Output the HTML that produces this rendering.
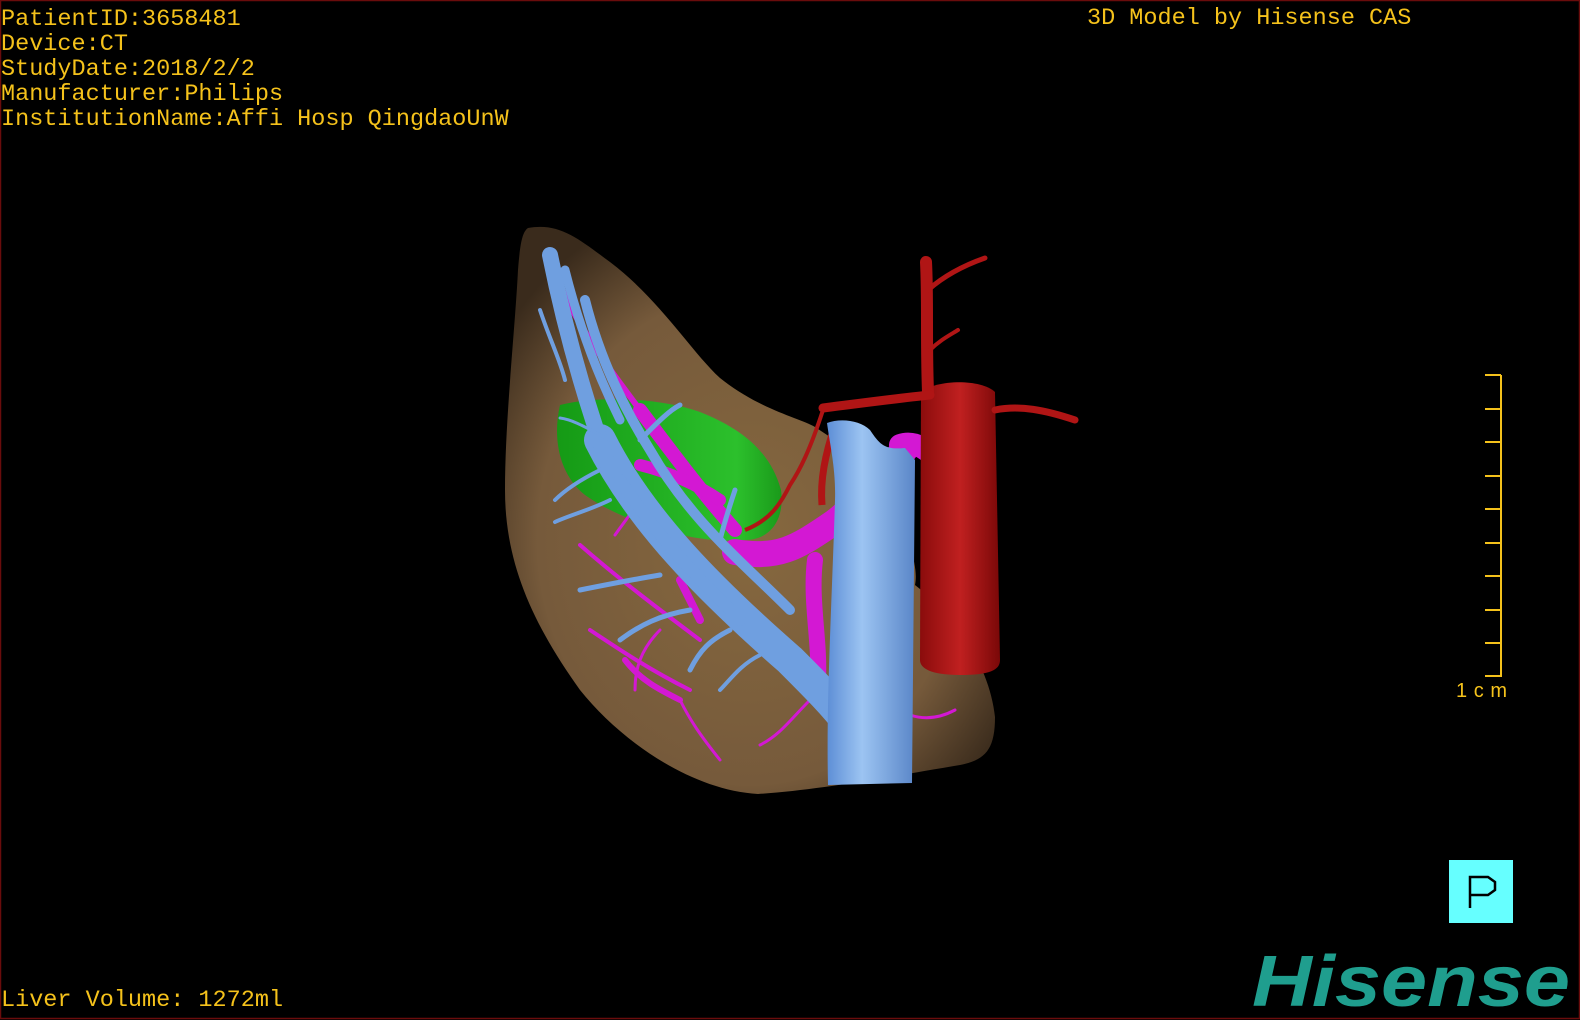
<!DOCTYPE html>
<html><head><meta charset="utf-8"><style>
html,body{margin:0;padding:0;background:#000;width:1580px;height:1020px;overflow:hidden}
svg{display:block}
</style></head><body>
<svg width="1580" height="1020" viewBox="0 0 1580 1020" xmlns="http://www.w3.org/2000/svg">
<defs>
<radialGradient id="lv" cx="0.5" cy="0.55" r="0.62"><stop offset="0" stop-color="#86683f"/><stop offset="0.7" stop-color="#765a3b"/><stop offset="1" stop-color="#3a2b1c"/></radialGradient>
<linearGradient id="ivc" x1="0" x2="1"><stop offset="0" stop-color="#5d8ed6"/><stop offset="0.4" stop-color="#9cc4f2"/><stop offset="1" stop-color="#5a86c8"/></linearGradient>
<linearGradient id="ao" x1="0" x2="1"><stop offset="0" stop-color="#8a0c0c"/><stop offset="0.5" stop-color="#c02020"/><stop offset="1" stop-color="#7a0808"/></linearGradient>
<linearGradient id="gb" x1="0" x2="1"><stop offset="0" stop-color="#159a15"/><stop offset="0.8" stop-color="#2cc02c"/><stop offset="1" stop-color="#1a9a1a"/></linearGradient>
</defs>
<rect x="0.5" y="0.5" width="1579" height="1018" fill="#000" stroke="#6a0c0c" stroke-width="1.5"/>
<!-- liver -->
<path d="M528,228 C560,222 580,240 610,262 C660,300 690,350 720,378 C760,410 800,418 815,427 L880,470 C900,520 920,560 915,585 C960,620 990,670 995,717 C995,750 985,760 960,765 C900,775 820,790 758,794 C690,790 620,740 580,690 C530,620 505,560 505,490 C505,420 515,330 518,270 C520,245 522,232 528,228 Z" fill="url(#lv)"/>
<!-- gallbladder -->
<path d="M560,405 C600,395 660,398 700,412 C740,428 770,450 781,490 C785,520 770,540 745,540 C690,545 620,520 585,495 C560,475 552,440 560,405 Z" fill="url(#gb)"/>
<!-- red artery small -->
<path d="M823,410 C810,450 800,470 790,485 C780,505 770,520 745,530" fill="none" stroke="#b01515" stroke-width="4"/>
<path d="M835,425 C825,455 820,480 822,505" fill="none" stroke="#b01515" stroke-width="7"/>
<!-- magenta portal -->
<g fill="none" stroke="#d318d3" stroke-linecap="round">
<path d="M735,552 C780,560 800,545 830,525 C860,505 880,470 905,450" stroke-width="26"/>
<path d="M900,445 C915,440 930,450 940,465" stroke-width="22"/>
<path d="M815,560 C810,600 820,640 818,680" stroke-width="16"/>
<path d="M735,530 C700,490 670,450 640,410" stroke-width="14"/>
<path d="M640,410 C610,370 580,330 560,285" stroke-width="6"/>
<path d="M720,500 C690,480 660,470 640,465" stroke-width="12"/>
<path d="M700,640 C660,610 620,580 580,545" stroke-width="4"/>
<path d="M690,690 C650,670 620,650 590,630" stroke-width="4"/>
<path d="M680,700 C660,690 640,680 625,660" stroke-width="6"/>
<path d="M680,700 C690,720 700,735 720,760" stroke-width="3"/>
<path d="M810,700 C790,720 780,735 760,745" stroke-width="3"/>
<path d="M910,715 C925,720 940,718 955,710" stroke-width="3"/>
<path d="M660,630 C640,650 635,670 635,690" stroke-width="3"/>
<path d="M640,500 C630,515 622,525 615,535" stroke-width="3"/>
<path d="M700,620 C690,600 685,590 680,580" stroke-width="8"/>
</g>
<!-- blue hepatic vein tree -->
<g fill="none" stroke="#6f9fe0" stroke-linecap="round">
<path d="M600,440 C640,520 710,590 790,660 C815,685 835,705 850,725" stroke-width="32"/>
<path d="M550,255 C565,330 585,400 610,470" stroke-width="16"/>
<path d="M565,270 C580,330 600,380 620,420" stroke-width="9"/>
<path d="M585,300 C600,360 625,410 650,450 C690,520 740,560 790,610" stroke-width="10"/>
<path d="M620,480 C660,540 700,580 740,620" stroke-width="12"/>
<path d="M600,470 C580,480 565,490 555,500" stroke-width="4"/>
<path d="M610,440 C590,430 575,420 560,418" stroke-width="3"/>
<path d="M660,575 C630,580 605,585 580,590" stroke-width="5"/>
<path d="M690,610 C660,615 640,625 620,640" stroke-width="5"/>
<path d="M730,630 C710,640 700,650 690,670" stroke-width="5"/>
<path d="M760,655 C740,665 730,680 720,690" stroke-width="4"/>
<path d="M540,310 C550,340 560,360 565,380" stroke-width="4"/>
<path d="M640,440 C660,420 670,410 680,405" stroke-width="5"/>
<path d="M720,540 C725,520 730,505 735,490" stroke-width="5"/>
<path d="M610,500 C590,510 570,515 555,522" stroke-width="4"/>
</g>
<!-- IVC -->
<path d="M827,423 C840,418 860,420 870,430 C880,445 885,450 905,448 L915,460 L912,783 L828,785 C826,700 832,600 835,500 C836,470 830,445 827,423 Z" fill="url(#ivc)"/>
<!-- aorta -->
<path d="M921,392 C935,380 980,378 995,392 L1000,660 C1000,670 990,675 960,675 C930,675 920,668 920,660 Z" fill="url(#ao)"/>
<g fill="none" stroke="#b01515" stroke-linecap="round">
<path d="M926,262 C928,300 926,340 928,392" stroke-width="12"/>
<path d="M928,290 C945,275 965,265 985,258" stroke-width="5"/>
<path d="M930,350 C940,340 950,335 958,330" stroke-width="4"/>
<path d="M823,408 C870,402 900,398 930,395" stroke-width="9"/>
<path d="M995,410 C1020,405 1045,410 1075,420" stroke-width="7"/>
</g>
<!-- text -->
<g font-family="'Liberation Mono',monospace" font-size="23.5" fill="#f5c21b">
<text x="1" y="25">PatientID:3658481</text>
<text x="1" y="50">Device:CT</text>
<text x="1" y="75">StudyDate:2018/2/2</text>
<text x="1" y="100">Manufacturer:Philips</text>
<text x="1" y="125">InstitutionName:Affi Hosp QingdaoUnW</text>
<text x="1087" y="24">3D Model by Hisense CAS</text>
<text x="1" y="1006">Liver Volume: 1272ml</text>
</g>
<!-- scale bar -->
<g stroke="#f5c21b" stroke-width="2">
<line x1="1501" y1="375" x2="1501" y2="677"/>
<line x1="1485" y1="375" x2="1501" y2="375"/>
<line x1="1485" y1="409" x2="1501" y2="409"/>
<line x1="1485" y1="442" x2="1501" y2="442"/>
<line x1="1485" y1="476" x2="1501" y2="476"/>
<line x1="1485" y1="509" x2="1501" y2="509"/>
<line x1="1485" y1="543" x2="1501" y2="543"/>
<line x1="1485" y1="576" x2="1501" y2="576"/>
<line x1="1485" y1="610" x2="1501" y2="610"/>
<line x1="1485" y1="643" x2="1501" y2="643"/>
<line x1="1485" y1="676" x2="1501" y2="676"/>
</g>
<text x="1456" y="697" font-family="'Liberation Sans',sans-serif" font-size="20" fill="#f5c21b" textLength="51">1cm</text>
<!-- P box -->
<rect x="1449" y="860" width="64" height="63" fill="#66ffff"/>
<path d="M1470,908 L1470,877 L1488,877 L1495,882 L1495,890 L1488,895 L1470,895" fill="none" stroke="#000" stroke-width="2.5"/>
<!-- Hisense logo -->
<text x="1252" y="1006" font-family="'Liberation Sans',sans-serif" font-weight="bold" font-style="italic" font-size="72" fill="#1f9e8e" textLength="318" lengthAdjust="spacingAndGlyphs">Hisense</text>
</svg>
</body></html>
